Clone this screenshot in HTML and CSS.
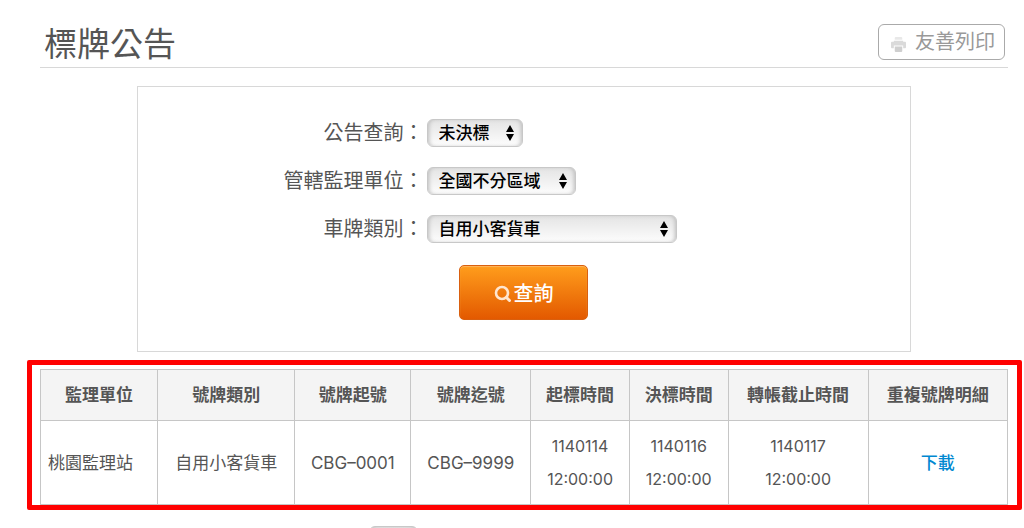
FILE: index.html
```
<!DOCTYPE html>
<html lang="zh-Hant">
<head>
    <meta charset="UTF-8">
    <meta name="viewport" content="width=device-width, initial-scale=1.0">
    <title>標牌公告</title>
    <link rel="stylesheet" href="styles.css">
</head>
<body>
    <div class="page-header">
        <h1>標牌公告</h1>
        <button type="button" class="print-btn">
            <svg width="15" height="15" viewBox="0 0 16 16" aria-hidden="true">
                <path d="M5 0h6a1 1 0 0 1 1 1v2H4V1a1 1 0 0 1 1-1z" fill="#e8e8e8"/>
                <path d="M1 5h2V4h10v1h2a1 1 0 0 1 1 1v5a1 1 0 0 1-1 1h-2V9H3v3H1a1 1 0 0 1-1-1V6a1 1 0 0 1 1-1z" fill="#dadada"/>
                <path d="M4 10h8v5a1 1 0 0 1-1 1H5a1 1 0 0 1-1-1z" fill="#cfcfcf"/>
            </svg>
            友善列印
        </button>
    </div>

    <form class="search-box">
        <div class="field">
            <label for="status">公告查詢：</label>
            <div class="select-wrap status">
                <select id="status">
                    <option>未決標</option>
                </select>
                <svg class="arrows" width="8" height="16" viewBox="0 0 8 16" aria-hidden="true"><path d="M4 0l4 7H0zM4 16l4-7H0z"/></svg>
            </div>
        </div>
        <div class="field">
            <label for="station">管轄監理單位：</label>
            <div class="select-wrap station">
                <select id="station">
                    <option>全國不分區域</option>
                </select>
                <svg class="arrows" width="8" height="16" viewBox="0 0 8 16" aria-hidden="true"><path d="M4 0l4 7H0zM4 16l4-7H0z"/></svg>
            </div>
        </div>
        <div class="field">
            <label for="plate">車牌類別：</label>
            <div class="select-wrap plate">
                <select id="plate">
                    <option>自用小客貨車</option>
                </select>
                <svg class="arrows" width="8" height="16" viewBox="0 0 8 16" aria-hidden="true"><path d="M4 0l4 7H0zM4 16l4-7H0z"/></svg>
            </div>
        </div>
        <button type="button" class="search-btn">
            <svg width="18" height="18" viewBox="0 0 18 18" aria-hidden="true">
                <circle cx="8" cy="9" r="6" fill="none" stroke="#ffe6cf" stroke-width="2.6"/>
                <path d="M12.5 13.5l3 3" fill="none" stroke="#ffe6cf" stroke-width="3" stroke-linecap="round"/>
            </svg>
            查詢
        </button>
    </form>

    <div class="result">
        <table>
            <colgroup>
                <col class="c-station">
                <col class="c-type">
                <col class="c-start">
                <col class="c-end">
                <col class="c-time">
                <col class="c-time">
                <col class="c-pay">
                <col class="c-detail">
            </colgroup>
            <thead>
                <tr>
                    <th>監理單位</th>
                    <th>號牌類別</th>
                    <th>號牌起號</th>
                    <th>號牌迄號</th>
                    <th>起標時間</th>
                    <th>決標時間</th>
                    <th>轉帳截止時間</th>
                    <th>重複號牌明細</th>
                </tr>
            </thead>
            <tbody>
                <tr>
                    <td class="left">桃園監理站</td>
                    <td>自用小客貨車</td>
                    <td>CBG–0001</td>
                    <td>CBG–9999</td>
                    <td class="time">1140114<br>12:00:00</td>
                    <td class="time">1140116<br>12:00:00</td>
                    <td class="time">1140117<br>12:00:00</td>
                    <td><a href="#">下載</a></td>
                </tr>
            </tbody>
        </table>
    </div>

    <div class="pager">
        <select aria-label="頁">
            <option>1</option>
        </select>
    </div>
</body>
</html>
```
FILE: styles.css
```
* {
    box-sizing: border-box;
}
body {
    margin: 0;
    padding: 18px 16px 0 40px;
    background: #fff;
    color: #555;
    font-family: Inter, "Noto Sans CJK TC", sans-serif;
    font-size: 17px;
}
button, select {
    font-family: inherit;
}
.page-header {
    display: flex;
    justify-content: space-between;
    align-items: center;
    height: 50px;
    padding: 0 3px 1px 4px;
    border-bottom: 1px solid #d8d8d8;
}
h1 {
    margin: 0;
    padding-top: 3px;
    font-size: 33px;
    font-weight: 400;
    line-height: 46px;
}
.print-btn {
    display: flex;
    align-items: center;
    gap: 9px;
    height: 36px;
    padding: 0 9px 0 12px;
    border: 1px solid #aaa;
    border-radius: 6px;
    background: #fff;
    color: #999;
    font-size: 20px;
    line-height: 34px;
}
.print-btn svg {
    margin-top: 4px;
}
.search-box {
    width: 80%;
    margin: 18px auto 8px;
    padding: 32px 0 31px;
    border: 1px solid #d8d8d8;
}
.field {
    display: flex;
    align-items: center;
    height: 28px;
    margin-bottom: 20px;
}
.field label {
    width: 37%;
    text-align: right;
    font-size: 20px;
    line-height: 28px;
}
.select-wrap {
    position: relative;
    margin-left: 3px;
}
.select-wrap.status {
    width: 96px;
}
.select-wrap.station {
    width: 149px;
}
.select-wrap.plate {
    width: 250px;
}
select {
    appearance: none;
    display: block;
    width: 100%;
    height: 28px;
    padding: 0 0 0 11px;
    border: 1px solid #c8c8c8;
    border-radius: 6px;
    background: linear-gradient(#e4e4e4, #fdfdfd);
    box-shadow: inset 3px 0 4px -2px #bbb, inset -3px 0 4px -2px #bbb;
    color: #000;
    font-size: 17px;
    font-weight: 500;
}
.arrows {
    position: absolute;
    top: 6px;
    right: 9px;
    pointer-events: none;
}
.search-btn {
    display: flex;
    justify-content: center;
    align-items: center;
    gap: 1px;
    width: 129px;
    height: 55px;
    margin: 22px auto 0;
    padding: 0;
    border: 1px solid #d9600f;
    border-radius: 5px;
    background: linear-gradient(#ff9d1c, #e35900);
    box-shadow: inset 0 1px 1px #ffb55c;
    color: #fff;
    font-size: 20px;
    font-weight: 500;
}
.result {
    margin: 0 -14px 0 -13px;
    padding: 4px 9px 0 8px;
    border: 5px solid #f00;
    border-radius: 2px;
}
table {
    width: 100%;
    table-layout: fixed;
    border-collapse: collapse;
}
th, td {
    padding: 9px 0 8px;
    border: 1px solid #c6c6c6;
    text-align: center;
    line-height: 33px;
}
th {
    background: #f4f4f4;
    font-weight: 700;
}
td.left {
    padding-left: 7px;
    text-align: left;
}
td.time {
    font-size: 16px;
}
td a {
    color: #0088d1;
    font-weight: 500;
    text-decoration: none;
}
.c-station {
    width: 12.1%;
}
.c-type {
    width: 14.2%;
}
.c-start {
    width: 12%;
}
.c-end {
    width: 12.4%;
}
.c-time {
    width: 10.2%;
}
.c-pay {
    width: 14.5%;
}
.c-detail {
    width: 14.4%;
}
.pager {
    width: 49px;
    margin: 16px 0 0 34%;
}
```
